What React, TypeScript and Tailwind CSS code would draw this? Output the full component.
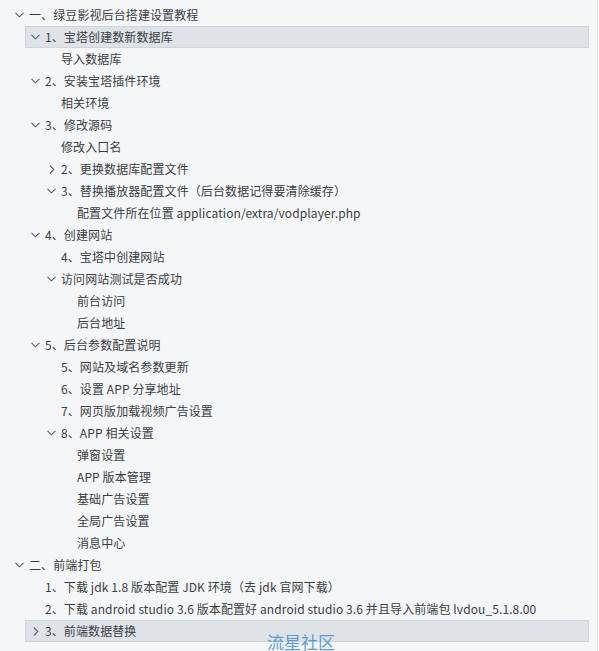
import React from "react";

type Node = { t: string; c?: Node[]; open?: boolean; sel?: boolean };

const tree: Node[] = [
  {
    t: "一、绿豆影视后台搭建设置教程",
    open: true,
    c: [
      { t: "1、宝塔创建数新数据库", open: true, sel: true, c: [{ t: "导入数据库" }] },
      { t: "2、安装宝塔插件环境", open: true, c: [{ t: "相关环境" }] },
      {
        t: "3、修改源码",
        open: true,
        c: [
          { t: "修改入口名" },
          { t: "2、更换数据库配置文件", open: false, c: [] },
          {
            t: "3、替换播放器配置文件（后台数据记得要清除缓存）",
            open: true,
            c: [{ t: "配置文件所在位置 application/extra/vodplayer.php" }],
          },
        ],
      },
      {
        t: "4、创建网站",
        open: true,
        c: [
          { t: "4、宝塔中创建网站" },
          { t: "访问网站测试是否成功", open: true, c: [{ t: "前台访问" }, { t: "后台地址" }] },
        ],
      },
      {
        t: "5、后台参数配置说明",
        open: true,
        c: [
          { t: "5、网站及域名参数更新" },
          { t: "6、设置 APP 分享地址" },
          { t: "7、网页版加载视频广告设置" },
          {
            t: "8、APP 相关设置",
            open: true,
            c: [
              { t: "弹窗设置" },
              { t: "APP 版本管理" },
              { t: "基础广告设置" },
              { t: "全局广告设置" },
              { t: "消息中心" },
            ],
          },
        ],
      },
    ],
  },
  {
    t: "二、前端打包",
    open: true,
    c: [
      { t: "1、下载 jdk 1.8 版本配置 JDK 环境（去 jdk 官网下载）" },
      { t: "2、下载 android studio 3.6 版本配置好 android studio 3.6 并且导入前端包 lvdou_5.1.8.00" },
      { t: "3、前端数据替换", open: false, sel: true, c: [] },
    ],
  },
];

type Row = { node: Node; depth: number };

function flatten(nodes: Node[], depth: number, out: Row[]) {
  for (const n of nodes) {
    out.push({ node: n, depth });
    if (n.c && n.open) flatten(n.c, depth + 1, out);
  }
  return out;
}

const indent = ["ml-[9px]", "ml-[25px]", "ml-[41px]", "ml-[57px]", "ml-[73px]"];

function ChevronDown() {
  return (
    <svg width="9" height="6" viewBox="0 0 9 6" className="block">
      <path d="M0.5 0.8 L4.5 4.8 L8.5 0.8" fill="none" stroke="#5a5e64" strokeWidth="1.1" />
    </svg>
  );
}

function ChevronRight() {
  return (
    <svg width="6" height="9" viewBox="0 0 6 9" className="block">
      <path d="M0.8 0.5 L4.8 4.5 L0.8 8.5" fill="none" stroke="#5a5e64" strokeWidth="1.1" />
    </svg>
  );
}

export default function App() {
  const rows = flatten(tree, 0, []);
  return (
    <div
      className="relative w-[599px] h-[651px] overflow-hidden bg-[#f5f6f8]"
      style={{ fontFamily: '"Noto Sans CJK SC", "Noto Sans", sans-serif' }}
    >
      <div className="w-[598px] h-full border-r border-[#e3e5e9] pt-[4px]">
        {rows.map((r, i) => {
          const isBranch = !!r.node.c;
          return (
            <div
              key={i}
              className={
                "h-[22px] mr-[8px] flex items-center border pl-[5px] " +
                indent[r.depth] +
                (r.node.sel ? " bg-[#dfe3e8] border-[#d0d5dc]" : " border-transparent")
              }
            >
              <div className="w-[9px] h-full flex items-center justify-center shrink-0 mr-[5px]">
                {isBranch ? r.node.open ? <ChevronDown /> : <ChevronRight /> : null}
              </div>
              <span className="text-[12px] leading-[20px] text-[#3b3e43] whitespace-nowrap tracking-[0.1px]">
                {r.node.t}
              </span>
            </div>
          );
        })}
      </div>
      <div className="absolute left-[267px] top-[631px] text-[17px] leading-[22px] text-[#4a95dc] opacity-90">
        流星社区
      </div>
    </div>
  );
}
